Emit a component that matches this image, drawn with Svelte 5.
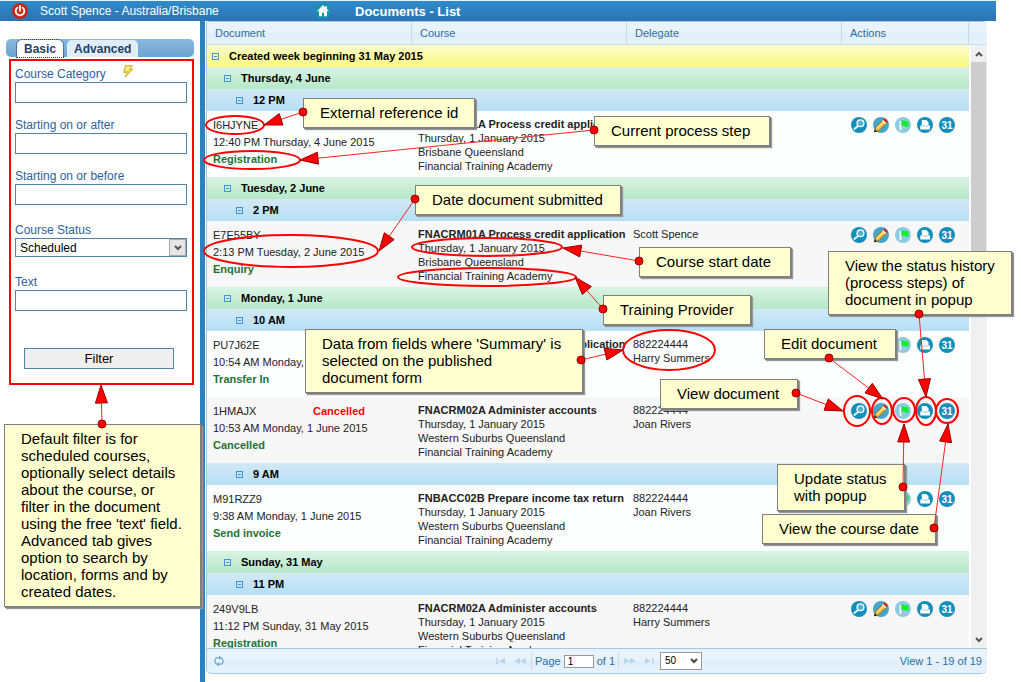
<script lang="ts">
	type Row = {
		type: 'week' | 'day' | 'hour' | 'doc';
		title?: string;
		ref?: string;
		created?: string;
		status?: string;
		cancelled?: boolean;
		course?: string[];
		delegate?: string[];
		odd?: boolean;
	};

	const started = 'Thursday, 1 January 2015';
	const provider = 'Financial Training Academy';

	const rows: Row[] = [
		{ type: 'week', title: 'Created week beginning 31 May 2015' },
		{ type: 'day', title: 'Thursday, 4 June' },
		{ type: 'hour', title: '12 PM' },
		{
			type: 'doc',
			ref: 'I6HJYNE',
			created: '12:40 PM Thursday, 4 June 2015',
			status: 'Registration',
			course: ['FNACRM01A Process credit application', started, 'Brisbane Queensland', provider],
			delegate: []
		},
		{ type: 'day', title: 'Tuesday, 2 June' },
		{ type: 'hour', title: '2 PM' },
		{
			type: 'doc',
			ref: 'E7E55BY',
			created: '2:13 PM Tuesday, 2 June 2015',
			status: 'Enquiry',
			course: ['FNACRM01A Process credit application', started, 'Brisbane Queensland', provider],
			delegate: ['Scott Spence'],
			odd: true
		},
		{ type: 'day', title: 'Monday, 1 June' },
		{ type: 'hour', title: '10 AM' },
		{
			type: 'doc',
			ref: 'PU7J62E',
			created: '10:54 AM Monday, 1 June 2015',
			status: 'Transfer In',
			course: ['FNACRM01A Process credit application', started, 'Brisbane Queensland', provider],
			delegate: ['882224444', 'Harry Summers']
		},
		{
			type: 'doc',
			ref: '1HMAJX',
			created: '10:53 AM Monday, 1 June 2015',
			status: 'Cancelled',
			cancelled: true,
			course: ['FNACRM02A Administer accounts', started, 'Western Suburbs Queensland', provider],
			delegate: ['882224444', 'Joan Rivers'],
			odd: true
		},
		{ type: 'hour', title: '9 AM' },
		{
			type: 'doc',
			ref: 'M91RZZ9',
			created: '9:38 AM Monday, 1 June 2015',
			status: 'Send invoice',
			course: ['FNBACC02B Prepare income tax return', started, 'Western Suburbs Queensland', provider],
			delegate: ['882224444', 'Joan Rivers']
		},
		{ type: 'day', title: 'Sunday, 31 May' },
		{ type: 'hour', title: '11 PM' },
		{
			type: 'doc',
			ref: '249V9LB',
			created: '11:12 PM Sunday, 31 May 2015',
			status: 'Registration',
			course: ['FNACRM02A Administer accounts', started, 'Western Suburbs Queensland', provider],
			delegate: ['882224444', 'Harry Summers'],
			odd: true
		}
	];

	const actions = ['View document', 'Edit document', 'Update status', 'Status history', 'Course date'];

	// Help notes over the page
	const notes = [
		{ x: 303, y: 98, w: 172, text: 'External reference id' },
		{ x: 594, y: 116, w: 176, text: 'Current process step' },
		{ x: 415, y: 185, w: 206, text: 'Date document submitted' },
		{ x: 639, y: 247, w: 152, text: 'Course start date' },
		{ x: 603, y: 295, w: 148, text: 'Training Provider' },
		{ x: 305, y: 329, w: 278, text: "Data from fields where 'Summary' is\nselected on the published\ndocument form" },
		{ x: 828, y: 251, w: 184, text: 'View the status history\n(process steps) of\ndocument in popup' },
		{ x: 764, y: 329, w: 132, text: 'Edit document' },
		{ x: 660, y: 379, w: 138, text: 'View document' },
		{ x: 777, y: 464, w: 128, text: 'Update status\nwith popup' },
		{ x: 762, y: 514, w: 174, text: 'View the course date' },
		{
			x: 4,
			y: 424,
			w: 197,
			text: "Default filter is for\nscheduled courses,\noptionally select details\nabout the course, or\nfilter in the document\nusing the free 'text' field.\nAdvanced tab gives\noption to search by\nlocation, forms and by\ncreated dates."
		}
	];

	// cx, cy, rx, ry
	const rings = [
		[235, 125, 29, 9],
		[252, 160, 48, 9],
		[291, 251, 87, 16],
		[487, 247, 75, 9],
		[487, 277, 89, 9],
		[669, 350, 46, 20],
		[857, 411, 13, 15],
		[882, 411, 10, 13],
		[904, 410, 11, 12],
		[926, 411, 10, 14],
		[947, 411, 11, 12]
	];

	// dot x, dot y, tip x, tip y
	const arrows = [
		[303, 112, 264, 125],
		[594, 130, 300, 160],
		[415, 199, 379, 251],
		[639, 261, 563, 248],
		[603, 309, 575, 277],
		[581, 360, 623, 350],
		[796, 393, 843, 411],
		[829, 358, 883, 399],
		[919, 314, 926, 397],
		[903, 487, 904, 424],
		[934, 528, 948, 424],
		[102, 424, 101, 385]
	];

	// Triangle with its point on the end of the line
	function head([x1, y1, x2, y2]: number[]) {
		const len = Math.hypot(x2 - x1, y2 - y1);
		const ux = (x2 - x1) / len;
		const uy = (y2 - y1) / len;
		const bx = x2 - ux * 18;
		const by = y2 - uy * 18;
		return `${x2},${y2} ${bx - uy * 6},${by + ux * 6} ${bx + uy * 6},${by - ux * 6}`;
	}

	let category = $state('');
	let after = $state('');
	let before = $state('');
	let text = $state('');
	let page = $state('1');
</script>

<div class="page">
	<header>
		<button class="power" aria-label="Log out">
			<svg viewBox="0 0 16 16" width="16" height="16">
				<circle cx="8" cy="8" r="8" fill="#c8281a" />
				<path d="M5.4 4.6a4.3 4.3 0 1 0 5.2 0" fill="none" stroke="#fff" stroke-width="1.8" stroke-linecap="round" />
				<path d="M8 2.8v5" stroke="#fff" stroke-width="1.8" stroke-linecap="round" />
			</svg>
		</button>
		<span class="user">Scott Spence - Australia/Brisbane</span>
		<a class="home" href="#home" aria-label="Home">
			<svg viewBox="0 0 16 16" width="16" height="16">
				<circle cx="8" cy="8" r="8" fill="#1593a8" />
				<path d="M8 2 2 8.200h2v5h3V9.800h2v3.400h3v-5h2L12 6.100V3.200h-1.500v1.400z" fill="#fff" />
			</svg>
		</a>
		<h1>Documents - List</h1>
	</header>

	<main>
		<aside>
			<div class="tabs" role="tablist">
				<button class="tab active" role="tab" aria-selected="true">Basic</button>
				<button class="tab" role="tab" aria-selected="false">Advanced</button>
			</div>
			<form onsubmit={(e) => e.preventDefault()}>
				<div class="field">
					<label for="category">
						Course Category
						<svg class="bolt" viewBox="0 0 12 13" width="12" height="13">
							<path d="M3.5.5h7L8 4h3L3 12.5 5 7.500H1.500z" fill="#f3d33c" stroke="#c9a93a" stroke-width=".8" />
							<path d="M4.500 1.500h4L6 5.500H3z" fill="#fbf0a0" />
						</svg>
					</label>
					<input id="category" type="text" bind:value={category} />
				</div>
				<div class="field">
					<label for="after">Starting on or after</label>
					<input id="after" type="text" bind:value={after} />
				</div>
				<div class="field">
					<label for="before">Starting on or before</label>
					<input id="before" type="text" bind:value={before} />
				</div>
				<div class="field spaced">
					<label for="status">Course Status</label>
					<div class="select-box">
						<select id="status">
							<option>Scheduled</option>
						</select>
						<span class="select-arrow">
							<svg viewBox="0 0 8 6" width="8" height="6"><path d="M1 1l3 3 3-3" fill="none" stroke="#555" stroke-width="2" /></svg>
						</span>
					</div>
				</div>
				<div class="field spaced">
					<label for="text">Text</label>
					<input id="text" type="text" bind:value={text} />
				</div>
				<button class="filter" type="submit">Filter</button>
			</form>
		</aside>

		<div class="splitter"></div>

		<section class="grid">
			<div class="body">
				<table>
					<colgroup>
						<col />
						<col class="c-course" />
						<col class="c-delegate" />
						<col class="c-actions" />
					</colgroup>
					<thead>
						<tr>
							<th>Document</th>
							<th>Course</th>
							<th>Delegate</th>
							<th>Actions</th>
						</tr>
					</thead>
					<tbody>
						{#each rows as row}
							{#if row.type === 'doc'}
								<tr class="doc" class:odd={row.odd}>
									<td class="document">
										<span class="ref">{row.ref}</span>{#if row.cancelled}<span class="cancelled">Cancelled</span>{/if}
										<div>{row.created}</div>
										<div class="status">{row.status}</div>
									</td>
									<td>
										{#each row.course ?? [] as line, i}
											<div class:name={i === 0}>{line}</div>
										{/each}
									</td>
									<td>
										{#each row.delegate ?? [] as line}
											<div>{line}</div>
										{/each}
									</td>
									<td class="actions">
										<div class="buttons">
											{#each actions as action, i}
												<button aria-label={action}>
													<svg viewBox="0 0 16 16" width="16" height="16">
														{#if i === 0}
															<circle cx="8" cy="8" r="8" fill="#148fbb" />
															<circle cx="9.500" cy="6.300" r="3.400" fill="#4fb4d4" stroke="#fff" stroke-width="1.300" />
															<path d="M7 9l-4.200 3.600" stroke="#e4f4fa" stroke-width="2" />
														{:else if i === 1}
															<circle cx="8" cy="8" r="8" fill="#45a5cb" />
															<path d="M1.500 14.800l1-4.300 8-8 3.500 3.200-8.200 8z" fill="#f6b93b" stroke="#6b4a1c" stroke-width=".6" />
															<path d="M4 11.500l7-7" stroke="#ffe28a" stroke-width="1.200" />
															<path d="M10 3l1.700-1.800 3.400 3.200-1.700 1.800z" fill="#d8261c" />
															<path d="M9 4l1-1 3.400 3.200-1 1z" fill="#f4f4f4" />
															<path d="M1 15.200l.7-3 2.600 2.200z" fill="#222" />
														{:else if i === 2}
															<circle cx="8" cy="8" r="8" fill="#8fcbe0" />
															<path d="M5.500 4v9" stroke="#fff" stroke-width="1.800" />
															<path d="M6.400 3.500c1.600-1 3 .8 4.600.6l2.500.6v4.800c-2.400.8-4-1.400-7.100-.6z" fill="#12f02c" />
														{:else if i === 3}
															<circle cx="8" cy="8" r="8" fill="#148fbb" />
															<path d="M4.800 8.500V3h4.400l2.300 2.300v3.200h1.500v4H3.300v-4z" fill="#fff" />
															<path d="M5 9h6.500" fill="none" stroke="#7fc3dc" stroke-width=".8" />
														{:else}
															<circle cx="8" cy="8" r="8" fill="#148fbb" />
															<text x="8" y="11.500" text-anchor="middle" font-size="10" font-weight="bold" fill="#fff">31</text>
														{/if}
													</svg>
												</button>
											{/each}
										</div>
									</td>
								</tr>
							{:else}
								<tr class="group {row.type}">
									<td colspan="4">
										<div class="group-title">
											<button class="toggle" aria-label="Collapse group"></button>
											{row.title}
										</div>
									</td>
								</tr>
							{/if}
						{/each}
					</tbody>
				</table>
				<div class="scroll">
					<div class="scroll-head"></div>
					<button aria-label="Scroll up">
						<svg viewBox="0 0 8 6" width="8" height="6"><path d="M1 5l3-3 3 3" fill="none" stroke="#555" stroke-width="2" /></svg>
					</button>
					<div class="track"><div class="thumb"></div></div>
					<button aria-label="Scroll down">
						<svg viewBox="0 0 8 6" width="8" height="6"><path d="M1 1l3 3 3-3" fill="none" stroke="#555" stroke-width="2" /></svg>
					</button>
				</div>
			</div>

			<footer>
				<button aria-label="Reload">
					<svg viewBox="0 0 12 12" width="12" height="12">
						<path d="M4.500 9.500C1.500 8.500 1 4.500 3.500 2.800H7M7.500 2.500c3 1 3.500 5 1 6.700H5" fill="none" stroke="#6aa5cf" stroke-width="1.200" />
						<path d="M6 .5l2.500 2.300L6 5zM6 7L3.500 9.200 6 11.500z" fill="#6aa5cf" />
					</svg>
				</button>
				<div class="pager">
					<button aria-label="First page">
						<svg viewBox="0 0 12 6" width="12" height="6"><path d="M2 0v6" stroke="#b5d5ec" stroke-width="1.500" /><path d="M10 0v6L4 3z" fill="#b5d5ec" /></svg>
					</button>
					<button aria-label="Previous page">
						<svg viewBox="0 0 12 6" width="12" height="6"><path d="M6 0v6L0 3zM12 0v6L6 3z" fill="#b5d5ec" /></svg>
					</button>
					<i class="sep"></i>
					<label for="page">Page</label>
					<input id="page" type="text" bind:value={page} />
					<span>of 1</span>
					<i class="sep"></i>
					<button aria-label="Next page">
						<svg viewBox="0 0 12 6" width="12" height="6"><path d="M0 0v6l6-3zM6 0v6l6-3z" fill="#b5d5ec" /></svg>
					</button>
					<button aria-label="Last page">
						<svg viewBox="0 0 12 6" width="12" height="6"><path d="M10 0v6" stroke="#b5d5ec" stroke-width="1.500" /><path d="M2 0v6l6-3z" fill="#b5d5ec" /></svg>
					</button>
					<div class="select-box size">
						<select aria-label="Rows per page">
							<option>50</option>
						</select>
						<span class="select-arrow">
							<svg viewBox="0 0 8 6" width="8" height="6"><path d="M1 1l3 3 3-3" fill="none" stroke="#444" stroke-width="2" /></svg>
						</span>
					</div>
				</div>
				<span class="info">View 1 - 19 of 19</span>
			</footer>
		</section>
	</main>

	<svg class="marks rings" aria-hidden="true">
		<rect x="10" y="60" width="183" height="324" />
		{#each rings as [cx, cy, rx, ry]}
			<ellipse {cx} {cy} {rx} {ry} />
		{/each}
	</svg>
	{#each notes as note}
		<div class="note" style="left: {note.x}px; top: {note.y}px; width: {note.w}px">{note.text}</div>
	{/each}
	<svg class="marks arrows" aria-hidden="true">
		{#each arrows as a}
			<line x1={a[0]} y1={a[1]} x2={a[2]} y2={a[3]} />
			<polygon points={head(a)} />
			<circle cx={a[0]} cy={a[1]} r="4" />
		{/each}
	</svg>
</div>

<style>
	:global(body) {
		margin: 0;
		background: #fff;
	}

	.page {
		position: relative;
		display: flex;
		flex-direction: column;
		height: 100vh;
		overflow: hidden;
		font-family: 'Liberation Sans', Arial, sans-serif;
		font-size: 11px;
		color: #222;
	}

	button,
	input,
	select {
		box-sizing: border-box;
		margin: 0;
		font-family: inherit;
	}

	button {
		padding: 0;
		border: 0;
		background: none;
		cursor: pointer;
	}

	svg {
		display: block;
	}

	header {
		display: flex;
		align-items: center;
		flex: none;
		height: 20px;
		margin-right: 25px;
		padding-left: 12px;
		border-top: 1px solid #eef2f5;
		background: linear-gradient(#2d8cca, #2e73b3);
		color: #fff;
	}

	.user {
		width: 275px;
		margin-left: 12px;
		font-size: 12px;
	}

	h1 {
		margin: 2px 0 0 24px;
		font-size: 13px;
		line-height: 16px;
	}

	main {
		display: flex;
		flex: 1;
		min-height: 0;
	}

	aside {
		box-sizing: border-box;
		flex: none;
		width: 200px;
		padding: 18px 6px 0;
	}

	.tabs {
		display: flex;
		align-items: flex-end;
		gap: 4px;
		height: 18px;
		padding-left: 11px;
		border-radius: 5px;
		background: linear-gradient(#8ab8dc, #6ba4d2);
	}

	.tab {
		height: 17px;
		padding: 0 7px;
		border-radius: 5px 5px 0 0;
		background: #dfeefa;
		color: #1f3f66;
		font-size: 12px;
		font-weight: bold;
	}

	.tab.active {
		background: #fff;
		outline: 1px dotted #1f3f66;
	}

	form {
		display: flex;
		flex-direction: column;
		gap: 14px;
		padding: 9px 7px 0 9px;
	}

	.field {
		display: flex;
		flex-direction: column;
	}

	.field.spaced {
		margin-top: 3px;
	}

	.field label {
		display: flex;
		gap: 16px;
		height: 16px;
		color: #2e6199;
		font-size: 12px;
		line-height: 16px;
	}

	.bolt {
		margin-top: -1px;
	}

	.field input {
		width: 100%;
		height: 21px;
		padding: 0 4px;
		border: 1px solid #4f86a6;
		background: #fff;
	}

	.select-box {
		position: relative;
	}

	select {
		display: block;
		width: 100%;
		height: 19px;
		padding: 0 4px;
		border: 1px solid #4f86a6;
		border-radius: 0;
		background: #fff;
		color: #000;
		font-size: 12px;
		line-height: 16px;
		appearance: none;
	}

	.select-arrow {
		position: absolute;
		top: 1px;
		right: 1px;
		bottom: 1px;
		display: flex;
		align-items: center;
		justify-content: center;
		width: 15px;
		border: 1px solid #aaa;
		background: #e6e6e6;
		pointer-events: none;
	}

	.filter {
		height: 21px;
		margin: 23px 13px 0 9px;
		border: 1px solid #4f86a6;
		background: #efefef;
		color: #000;
		font-size: 13px;
	}

	.splitter {
		flex: none;
		width: 5px;
		background: #2c82c0;
	}

	.grid {
		display: flex;
		flex-direction: column;
		flex: 1;
		min-width: 0;
		margin: 0 34px 8px 1px;
		border: 1px solid #a6c9e2;
		border-right: 0;
		border-radius: 4px 4px 6px 6px;
		overflow: hidden;
	}

	.body {
		display: flex;
		flex: 1;
		align-items: stretch;
		min-height: 0;
		overflow: hidden;
	}

	table {
		flex: 1;
		width: 0;
		height: max-content;
		border-collapse: separate;
		border-spacing: 0;
		table-layout: fixed;
	}

	.c-course,
	.c-delegate {
		width: 215px;
	}

	.c-actions {
		width: 127px;
	}

	th,
	.scroll-head {
		box-sizing: border-box;
		height: 23px;
		border-bottom: 1px solid #c5dbec;
		background: linear-gradient(#e8f3fc 50%, #dfeefb 50%, #e8f3fc);
	}

	th {
		padding: 0 8px;
		border-right: 1px solid #c5dbec;
		color: #2e6e9e;
		font-weight: normal;
		text-align: left;
	}

	.group td {
		height: 22px;
		padding: 0;
		color: #000;
		font-weight: bold;
	}

	.group-title {
		display: flex;
		align-items: center;
		gap: 10px;
		padding-left: 5px;
	}

	.week td {
		background: linear-gradient(#fcfccb, #fafa80);
	}

	.day td {
		background: linear-gradient(#dbf4e4, #b5e8c7);
	}

	.hour td {
		background: linear-gradient(#d3e9f6, #b5dff5);
	}

	.day .group-title {
		padding-left: 17px;
	}

	.hour .group-title {
		padding-left: 29px;
	}

	.toggle {
		width: 7px;
		height: 7px;
		border: 1px solid #3f94d1;
		background: linear-gradient(#3f94d1, #3f94d1) center / 3px 1px no-repeat;
	}

	.doc td {
		height: 60px;
		padding: 6px 0 0 6px;
		background: #fdfefe;
		line-height: 14px;
		vertical-align: top;
		white-space: nowrap;
		overflow: hidden;
	}

	.doc.odd td {
		background: #f7f7f7;
	}

	.doc td.document {
		line-height: 17px;
	}

	.ref {
		display: inline-block;
		width: 100px;
	}

	.cancelled {
		color: #f00;
		font-weight: bold;
	}

	.status {
		color: #1f7334;
		font-weight: bold;
	}

	.name {
		font-weight: bold;
	}

	.doc td.actions {
		padding-left: 9px;
	}

	.buttons {
		display: flex;
		gap: 6px;
	}

	.scroll {
		display: flex;
		flex-direction: column;
		flex: none;
		width: 18px;
	}

	.scroll button {
		display: flex;
		align-items: center;
		justify-content: center;
		flex: none;
		height: 17px;
		margin-left: 2px;
		background: #f0f0f0;
	}

	.track {
		flex: 1;
		margin-left: 2px;
		background: #f0f0f0;
	}

	.thumb {
		height: 38%;
		margin-right: 1px;
		background: #cdcdcd;
	}

	footer {
		display: grid;
		grid-template-columns: 1fr auto 1fr;
		align-items: center;
		flex: none;
		height: 24px;
		padding: 0 5px 0 6px;
		border-top: 1px solid #a6c9e2;
		background: linear-gradient(#e8f3fc 50%, #dfeefb 50%, #e8f3fc);
		color: #2e6e9e;
	}

	.pager {
		display: flex;
		align-items: center;
		gap: 3px;
	}

	.pager button {
		padding: 0 2px;
	}

	.pager input {
		width: 30px;
		height: 13px;
		padding: 0 3px;
		border: 1px solid #999;
		background: #fff;
		font-size: 10px;
	}

	.sep {
		width: 1px;
		height: 18px;
		background: #c9dae8;
	}

	.size {
		width: 42px;
	}

	.size select {
		height: 18px;
		border-color: #999;
		font-size: 10px;
	}

	.size .select-arrow {
		border: 0;
		background: none;
	}

	.info {
		text-align: right;
	}

	/* Help notes */
	.marks {
		position: absolute;
		top: 0;
		left: 0;
		width: 100%;
		height: 100%;
		pointer-events: none;
	}

	.rings {
		fill: none;
		stroke: #f00;
		stroke-width: 2;
	}

	.note {
		position: absolute;
		box-sizing: border-box;
		padding: 5px 0 6px 16px;
		border: 1px solid #808080;
		background: #ffffcf;
		box-shadow: 1px 1px 0 #808080, 2px 2px 1px #999;
		color: #000;
		font-size: 15px;
		line-height: 17px;
		white-space: pre;
	}

	.arrows line {
		stroke: #f22;
		stroke-width: 1;
	}

	.arrows polygon,
	.arrows circle {
		fill: #f00;
		stroke: #900;
		stroke-width: 1;
	}
</style>
